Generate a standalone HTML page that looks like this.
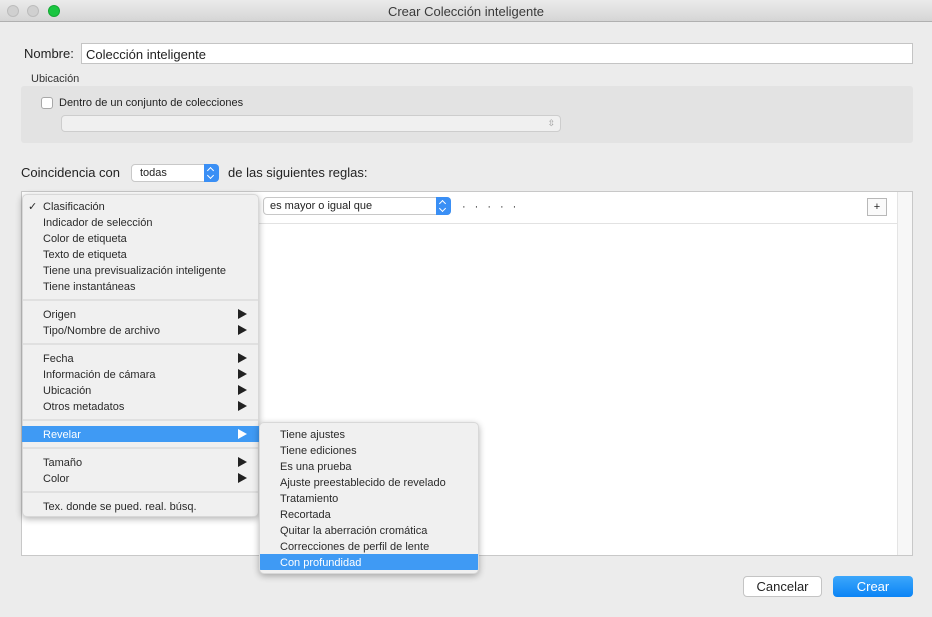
<!DOCTYPE html>
<html><head><meta charset="utf-8"><style>
*{margin:0;padding:0;box-sizing:border-box}
body{width:932px;height:617px;background:#ececec;font-family:"Liberation Sans",sans-serif;color:#222;position:relative;overflow:hidden}
.a{position:absolute}
.t{font-size:11px;white-space:nowrap}
.sel{position:absolute;background:#fff;border:1px solid #c8c8c8;border-radius:4px;font-size:11px;padding-left:8px;line-height:17px}
.sel .ar{position:absolute;right:-1px;top:-1px;bottom:-1px;width:15px;background:#3a8ff5;border-radius:0 4px 4px 0}
.ar:before,.ar:after{content:"";position:absolute;left:4px;width:4px;height:4px;border-left:1.3px solid #fff;border-top:1.3px solid #fff}
.ar:before{top:4px;transform:rotate(45deg)}
.ar:after{bottom:4px;transform:rotate(225deg)}
.mi{position:absolute;font-size:11px;color:#2a2a2a;white-space:nowrap;height:16px;line-height:18px}
.tri{position:absolute;width:0;height:0;border-left:9px solid #222;border-top:5px solid transparent;border-bottom:5px solid transparent}
.sep{position:absolute;height:2px;background:#e0e0e0}
</style></head><body>
<div class="a" style="left:0;top:0;width:932px;height:22px;background:linear-gradient(#ebebeb,#d5d5d5);border-bottom:1px solid #b0b0b0"></div>
<div class="a" style="left:7px;top:5px;width:12px;height:12px;border-radius:50%;background:#d0d0d0;border:1px solid #bcbcbc"></div>
<div class="a" style="left:27px;top:5px;width:12px;height:12px;border-radius:50%;background:#d0d0d0;border:1px solid #bcbcbc"></div>
<div class="a" style="left:48px;top:5px;width:12px;height:12px;border-radius:50%;background:#1ac641;border:1px solid #14a834"></div>
<div class="a" style="left:0;top:4px;width:932px;text-align:center;font-size:13px;color:#3a3a3a">Crear Colección inteligente</div>

<div class="a" style="left:24px;top:46px;font-size:13px">Nombre:</div>
<div class="a" style="left:81px;top:43px;width:832px;height:21px;background:#fff;border:1px solid #c4c4c4;font-size:13px;padding:3px 4px">Colección inteligente</div>
<div class="a t" style="left:31px;top:73px;color:#333">Ubicación</div>
<div class="a" style="left:21px;top:86px;width:892px;height:57px;background:#e3e3e3;border-radius:3px"></div>
<div class="a" style="left:41px;top:97px;width:12px;height:12px;background:#fff;border:1px solid #a8a8a8;border-radius:3px"></div>
<div class="a t" style="left:59px;top:97px">Dentro de un conjunto de colecciones</div>
<div class="a" style="left:61px;top:115px;width:500px;height:17px;background:#f0f0f0;border:1px solid #cdcdcd;border-radius:4px"><span style="position:absolute;right:5px;top:0;font-size:9px;color:#999;line-height:15px">⇳</span></div>

<div class="a" style="left:21px;top:165px;font-size:13px">Coincidencia con</div>
<div class="sel" style="left:131px;top:164px;width:88px;height:18px">todas<div class="ar"></div></div>
<div class="a" style="left:228px;top:165px;font-size:13px">de las siguientes reglas:</div>

<div class="a" style="left:21px;top:191px;width:892px;height:365px;background:#fff;border:1px solid #c8c8c8"></div>
<div class="a" style="left:897px;top:192px;width:15px;height:363px;background:#f7f7f7;border-left:1px solid #e4e4e4"></div>
<div class="a" style="left:22px;top:223px;width:875px;height:1px;background:#e2e2e2"></div>
<div class="sel" style="left:263px;top:197px;width:188px;height:18px;font-size:11px;padding-left:6px">es mayor o igual que<div class="ar"></div></div>
<div class="a" style="left:462px;top:201px;font-size:11px;letter-spacing:9px">·····</div>
<div class="a" style="left:867px;top:198px;width:20px;height:18px;border:1px solid #b8b8b8;background:#fafafa;font-size:11px;text-align:center;line-height:17px">+</div>

<div class="a" style="left:22px;top:194px;width:237px;height:323px;background:#f0f0f0;border-radius:5px;box-shadow:0 2px 7px rgba(0,0,0,.3);border:1px solid #d8d8d8"></div>
<div class="mi" style="left:28px;top:198px">✓</div>
<div class="mi" style="left:43px;top:198px">Clasificación</div>
<div class="mi" style="left:43px;top:214px">Indicador de selección</div>
<div class="mi" style="left:43px;top:230px">Color de etiqueta</div>
<div class="mi" style="left:43px;top:246px">Texto de etiqueta</div>
<div class="mi" style="left:43px;top:262px">Tiene una previsualización inteligente</div>
<div class="mi" style="left:43px;top:278px">Tiene instantáneas</div>
<div class="sep" style="left:23px;top:299px;width:235px"></div>
<div class="mi" style="left:43px;top:306px">Origen</div><div class="tri" style="left:238px;top:309px"></div>
<div class="mi" style="left:43px;top:322px">Tipo/Nombre de archivo</div><div class="tri" style="left:238px;top:325px"></div>
<div class="sep" style="left:23px;top:343px;width:235px"></div>
<div class="mi" style="left:43px;top:350px">Fecha</div><div class="tri" style="left:238px;top:353px"></div>
<div class="mi" style="left:43px;top:366px">Información de cámara</div><div class="tri" style="left:238px;top:369px"></div>
<div class="mi" style="left:43px;top:382px">Ubicación</div><div class="tri" style="left:238px;top:385px"></div>
<div class="mi" style="left:43px;top:398px">Otros metadatos</div><div class="tri" style="left:238px;top:401px"></div>
<div class="sep" style="left:23px;top:419px;width:235px"></div>
<div class="a" style="left:22px;top:426px;width:237px;height:16px;background:#3f9af4"></div>
<div class="mi" style="left:43px;top:426px;color:#fff">Revelar</div><div class="tri" style="left:238px;top:429px;border-left-color:#fff"></div>
<div class="sep" style="left:23px;top:447px;width:235px"></div>
<div class="mi" style="left:43px;top:454px">Tamaño</div><div class="tri" style="left:238px;top:457px"></div>
<div class="mi" style="left:43px;top:470px">Color</div><div class="tri" style="left:238px;top:473px"></div>
<div class="sep" style="left:23px;top:491px;width:235px"></div>
<div class="mi" style="left:43px;top:498px">Tex. donde se pued. real. búsq.</div>

<div class="a" style="left:259px;top:422px;width:220px;height:152px;background:#f0f0f0;border-radius:5px;box-shadow:0 2px 7px rgba(0,0,0,.3);border:1px solid #d8d8d8;overflow:hidden"><div class="a" style="left:0;top:131px;width:220px;height:16px;background:#3f9af4"></div></div>
<div class="mi" style="left:280px;top:426px">Tiene ajustes</div>
<div class="mi" style="left:280px;top:442px">Tiene ediciones</div>
<div class="mi" style="left:280px;top:458px">Es una prueba</div>
<div class="mi" style="left:280px;top:474px">Ajuste preestablecido de revelado</div>
<div class="mi" style="left:280px;top:490px">Tratamiento</div>
<div class="mi" style="left:280px;top:506px">Recortada</div>
<div class="mi" style="left:280px;top:522px">Quitar la aberración cromática</div>
<div class="mi" style="left:280px;top:538px">Correcciones de perfil de lente</div>
<div class="mi" style="left:280px;top:554px;color:#fff">Con profundidad</div>

<div class="a" style="left:743px;top:576px;width:79px;height:21px;background:#fff;border:1px solid #c4c4c4;border-radius:4px;font-size:13px;text-align:center;line-height:19px">Cancelar</div>
<div class="a" style="left:833px;top:576px;width:80px;height:21px;background:linear-gradient(#3ca7fb,#0b84f5);border-radius:4px;font-size:13px;color:#fff;text-align:center;line-height:21px">Crear</div>
</body></html>
